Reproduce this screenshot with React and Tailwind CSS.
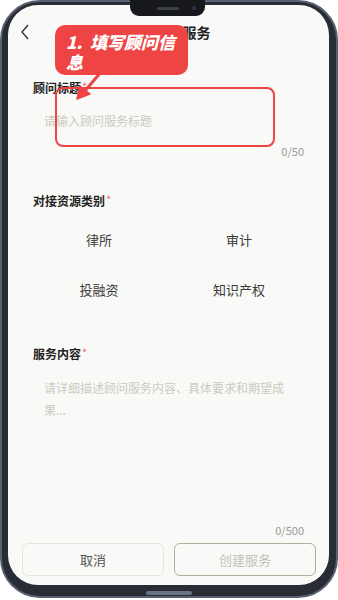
import React from "react";

const font = { fontFamily: '"Noto Sans CJK SC", "Noto Sans", sans-serif' };

const Label = ({ text }) => (
  <div className="flex items-start px-[25px] h-[16px] text-[12px] leading-[16px] font-bold text-[#222]">
    {text}
    <span className="text-[#f26b6b] text-[11px] leading-[11px] ml-[1px] mt-[1px] font-normal">*</span>
  </div>
);

const Counter = ({ text }) => (
  <div className="h-[14px] px-[25px] text-right text-[11px] leading-[14px] text-[#9a9a9a]">{text}</div>
);

export default function App() {
  const categories = ["律所", "审计", "投融资", "知识产权"];

  return (
    <div className="relative w-[338px] h-[600px] bg-white overflow-hidden" style={font}>
      {/* phone frame */}
      <div className="h-[598px] rounded-[40px] border-2 border-[#586070] bg-[#282c34] pt-[3px] pl-[6px] pr-[7px] pb-[11px]">
        <div className="relative h-full rounded-[30px] bg-[#f9f9f7] flex flex-col overflow-hidden">
          {/* header */}
          <div className="relative mt-[13px] h-[28px] flex items-center justify-center">
            <svg className="absolute left-[12px] top-[6px]" width="10" height="16" viewBox="0 0 10 16">
              <path d="M8 1 L2 8 L8 15" fill="none" stroke="#333" strokeWidth="1.4" />
            </svg>
            <span className="text-[14px] font-bold text-[#222]">创建顾问服务</span>
          </div>

          <div className="mt-[34px]">
            <Label text="顾问标题" />
          </div>
          <div className="mt-[2px] h-[46px] flex items-center pl-[36px] text-[12px] text-[#c9ccc0]">
            请输入顾问服务标题
          </div>
          <Counter text="0/50" />

          <div className="mt-[35px]">
            <Label text="对接资源类别" />
          </div>
          <div className="mt-[6px] grid grid-cols-2 pl-[21px] pr-[20px]">
            {categories.map((c) => (
              <div key={c} className="h-[50px] flex items-center justify-center text-[13px] text-[#3a3a3a]">
                {c}
              </div>
            ))}
          </div>

          <div className="mt-[31px]">
            <Label text="服务内容" />
          </div>
          <div className="h-[161px] pl-[36px] pr-[41px] pt-[15px] text-[12px] leading-[22px] text-[#c9ccc0]">
            请详细描述顾问服务内容、具体要求和期望成果...
          </div>
          <Counter text="0/500" />

          <div className="mt-[6px] flex gap-[10px] pl-[14px] pr-[13px]">
            <button className="flex-1 h-[33px] rounded-[6px] border border-[#e8e4da] bg-[#f9f9f7] text-[13px] text-[#555]">
              取消
            </button>
            <button className="flex-1 h-[33px] rounded-[6px] border border-[#a7b39a] bg-[#f9f9f7] text-[13px] text-[#bfc3b8]">
              创建服务
            </button>
          </div>
        </div>
      </div>

      {/* notch */}
      <div className="absolute left-[130px] top-0 w-[75px] h-[16px] rounded-b-[9px] bg-[#16181c] flex items-center justify-center">
        <div className="w-[22px] h-[3px] rounded-full bg-[#3a3f48]" />
        <div className="absolute right-[9px] top-[6px] w-[4px] h-[4px] rounded-full bg-[#2c3340]" />
      </div>

      {/* home indicator */}
      <div className="absolute left-[146px] top-[591px] w-[46px] h-[4px] rounded-full bg-[#6b7383]" />

      {/* tutorial highlight */}
      <div className="absolute left-[55px] top-[87px] w-[220px] h-[60px] rounded-[8px] border-[2.5px] border-[#ef4444]" />
      <svg className="absolute left-0 top-0" width="338" height="120" viewBox="0 0 338 120">
        <path d="M101 72 L84 92" stroke="#ef4444" strokeWidth="3" strokeLinecap="round" />
        <path d="M77 99 L80 86 L90 94 Z" fill="#ef4444" stroke="#ef4444" strokeWidth="1.5" strokeLinejoin="round" />
      </svg>
      <div className="absolute left-[55px] top-[25px] w-[133px] h-[50px] rounded-[10px] bg-[#ef4444] pl-[11px] pr-[8px] pt-[7px] text-white text-[17px] leading-[20px] font-black italic">
        1.&nbsp;&nbsp;填写顾问信息
      </div>
    </div>
  );
}
